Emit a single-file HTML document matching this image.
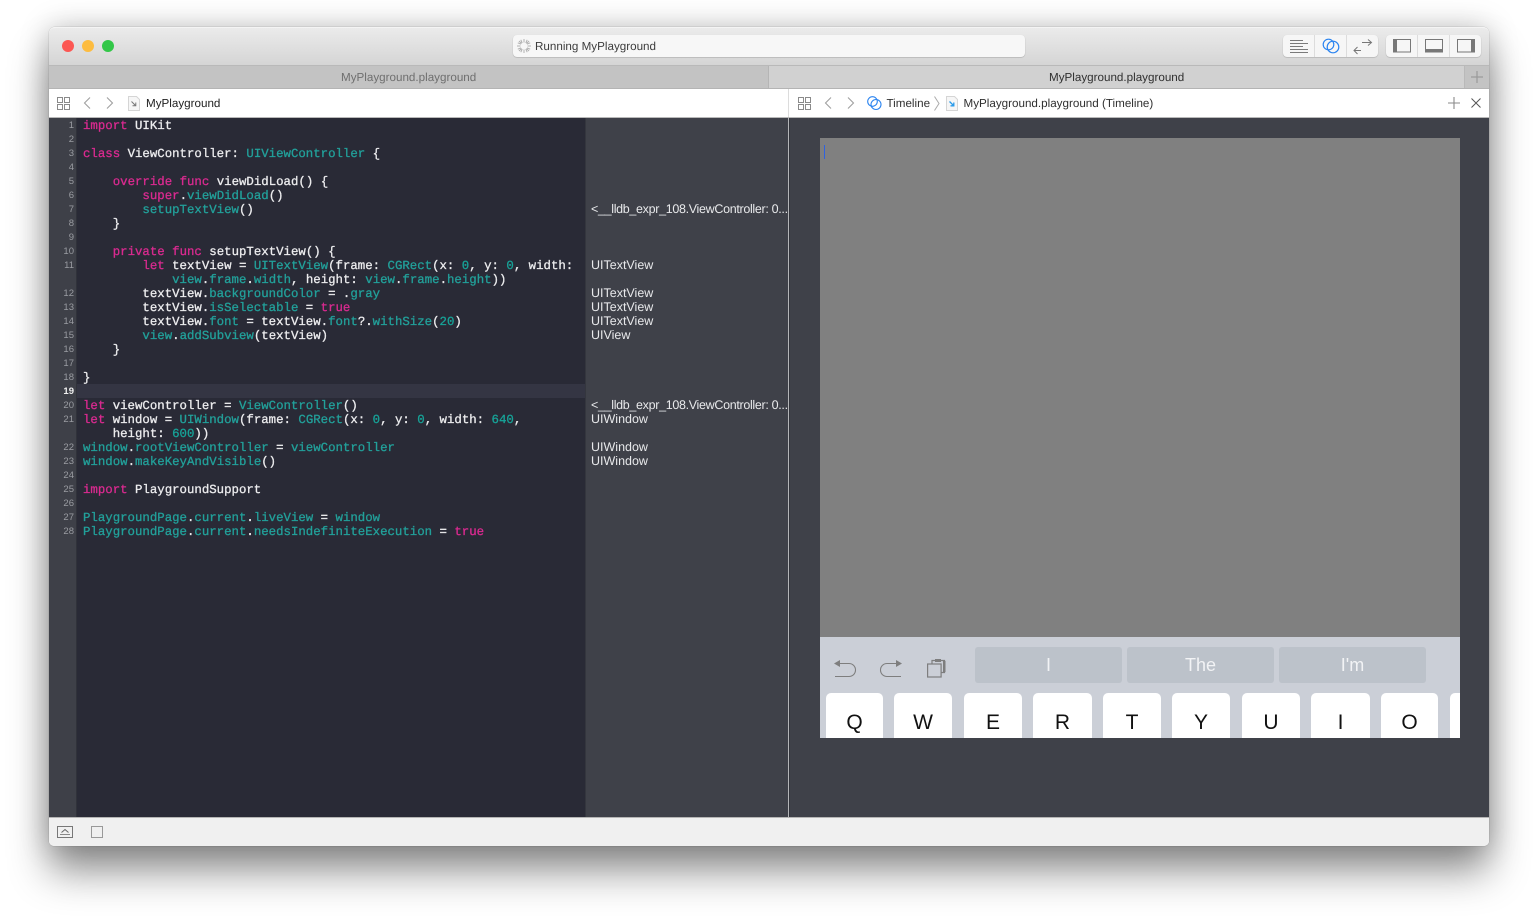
<!DOCTYPE html>
<html><head><meta charset="utf-8"><style>
html,body{margin:0;padding:0;background:#fff;width:1537px;height:920px;overflow:hidden}
*{box-sizing:border-box}
.a{position:absolute}
#win{position:absolute;left:49px;top:27px;width:1440px;height:819px;border-radius:6px 6px 5px 5px;box-shadow:0 0 0 .5px rgba(0,0,0,.12),0 26px 40px rgba(0,0,0,.42),0 0 30px rgba(0,0,0,.22)}
.s{font-family:"Liberation Sans",sans-serif;font-size:11.65px;line-height:14px;white-space:pre;position:absolute;text-rendering:geometricPrecision;margin-top:1px}
.c{font-family:"Liberation Mono",monospace;font-size:12.38px;line-height:14px;white-space:pre;position:absolute;left:83px;color:#ececee;text-rendering:geometricPrecision;-webkit-text-stroke:.3px;margin-top:1px}
.k{color:#da2a90}.t{color:#22a09a}.n{color:#17a398}
.g{font-family:"Liberation Sans",sans-serif;font-size:9.5px;line-height:14px;position:absolute;left:49px;width:25px;text-align:right;color:#9a9ca2;margin-top:1px}
.r{font-family:"Liberation Sans",sans-serif;font-size:12.5px;line-height:14px;position:absolute;left:591px;color:#e8e9eb;white-space:pre;text-rendering:geometricPrecision}
.l{letter-spacing:-.32px}
.key{position:absolute;top:693px;height:45px;background:#fff;border-radius:5px 5px 0 0;font-family:"Liberation Sans",sans-serif;font-size:21px;text-align:center;line-height:59px;color:#111;overflow:hidden}
.sug{position:absolute;top:647px;height:36px;width:147px;background:#bcc2ca;border-radius:3px;color:#f2f3f5;font-family:"Liberation Sans",sans-serif;font-size:18px;text-align:center;line-height:36px}
svg{position:absolute;overflow:visible}
</style></head><body>
<div id="win"></div>

<!-- title bar -->
<div class="a" style="left:49px;top:27px;width:1440px;height:38px;background:linear-gradient(#ebebeb,#d5d5d5);border-radius:6px 6px 0 0;border-top:1px solid #f4f4f4"></div>
<div class="a" style="left:62px;top:40px;width:12px;height:12px;border-radius:50%;background:#fc5753"></div>
<div class="a" style="left:82px;top:40px;width:12px;height:12px;border-radius:50%;background:#fdbc40"></div>
<div class="a" style="left:102px;top:40px;width:12px;height:12px;border-radius:50%;background:#33c748"></div>

<div class="a" style="left:513px;top:35px;width:512px;height:22px;background:#f7f7f7;border-radius:4px;box-shadow:0 .5px 1px rgba(0,0,0,.25)"></div>
<svg style="left:517px;top:39px" width="14" height="14" stroke="#b0b0b0" stroke-width="1" fill="none"><path d="M7 0v3.500M7 10.500V14M0 7h3.500M10.500 7H14M2 2l2.500 2.500M9.500 9.500L12 12M12 2L9.500 4.500M4.500 9.500L2 12M3.800 .8l1.400 3.200M8.800 10l1.400 3.200M.8 10.200L4 8.800M10 5.200l3.200-1.400M10.200 .8L8.800 4M5.200 10l-1.400 3.200M.8 3.800L4 5.200M10 8.800l3.200 1.400"/></svg>
<div class="s" style="left:535px;top:39px;color:#3d3d3d">Running MyPlayground</div>

<div class="a" style="left:1283px;top:35px;width:95px;height:22px;background:#f6f6f6;border-radius:4px;box-shadow:0 .5px 1px rgba(0,0,0,.25)"></div>
<div class="a" style="left:1386px;top:35px;width:95px;height:22px;background:#f6f6f6;border-radius:4px;box-shadow:0 .5px 1px rgba(0,0,0,.25)"></div>
<div class="a" style="left:1314px;top:35px;width:1px;height:22px;background:#dcdcdc"></div>
<div class="a" style="left:1346px;top:35px;width:1px;height:22px;background:#dcdcdc"></div>
<div class="a" style="left:1417px;top:35px;width:1px;height:22px;background:#dcdcdc"></div>
<div class="a" style="left:1449px;top:35px;width:1px;height:22px;background:#dcdcdc"></div>
<svg style="left:1290px;top:40px" width="18" height="13" stroke="#7a7a7a" stroke-width="1" fill="none"><path d="M0 .5h13M0 3.500h18M0 6.500h13M0 9.500h18M0 12.500h18"/></svg>
<svg style="left:1322px;top:38px" width="18" height="16" stroke="#2b84f0" stroke-width="1.200" fill="none"><circle cx="6.500" cy="6.500" r="5.300"/><circle cx="11" cy="9" r="5.800"/></svg>
<svg style="left:1353px;top:39px" width="20" height="15" stroke="#777" stroke-width="1" fill="none"><path d="M1 11.500h7M4.500 8l-3.500 3.500 3.500 3.500M9 3.500h9M15 .5l3.500 3-3.500 3"/></svg>
<svg style="left:1393px;top:39px" width="18" height="14" fill="none"><rect x=".5" y=".5" width="17" height="12.500" stroke="#777"/><rect x="1" y="1" width="3" height="12" fill="#777"/></svg>
<svg style="left:1425px;top:39px" width="18" height="14" fill="none"><rect x=".5" y=".5" width="17" height="12.500" stroke="#777"/><rect x="1" y="10" width="16" height="3" fill="#777"/></svg>
<svg style="left:1457px;top:39px" width="18" height="14" fill="none"><rect x=".5" y=".5" width="17" height="12.500" stroke="#777"/><rect x="14" y="1" width="3" height="12" fill="#777"/></svg>

<!-- tabs -->
<div class="a" style="left:49px;top:65px;width:1440px;height:24px;background:#c3c3c3;border-top:1px solid #b9b9b9;border-bottom:1px solid #b4b4b4"></div>
<div class="a" style="left:768px;top:66px;width:697px;height:22px;background:#d1d1d1;border-left:1px solid #b5b5b5;border-right:1px solid #b9b9b9"></div>
<div class="s" style="left:341px;top:70px;color:#6f6f6f">MyPlayground.playground</div>
<div class="s" style="left:1049px;top:70px;color:#303030">MyPlayground.playground</div>
<svg style="left:1471px;top:71px" width="12" height="12" stroke="#9a9a9a" stroke-width="1.200"><path d="M6 0v12M0 6h12"/></svg>

<!-- nav bars -->
<div class="a" style="left:49px;top:89px;width:1440px;height:29px;background:#fff;border-bottom:1px solid #b9b9b9"></div>
<div class="a" style="left:788px;top:89px;width:1px;height:28px;background:#dcdcdc"></div>
<svg style="left:57px;top:97px" width="13" height="13" stroke="#8a8a8a" stroke-width="1" fill="none"><path d="M.5.500h5v5h-5zM7.500.500h5v5h-5zM.5 7.500h5v5h-5zM7.500 7.500h5v5h-5z"/></svg>
<svg style="left:83px;top:97px" width="8" height="12" stroke="#a0a0a0" stroke-width="1.100" fill="none"><path d="M7 .5L1.500 6 7 11.500"/></svg>
<svg style="left:106px;top:97px" width="8" height="12" stroke="#a0a0a0" stroke-width="1.100" fill="none"><path d="M1 .5L6.500 6 1 11.500"/></svg>
<svg style="left:128px;top:96px" width="12" height="15" fill="none"><path d="M.5.500h8l3 3v11H.5z" fill="#f6f6f6" stroke="#d5d5d5"/><path d="M3.500 5.500l4 4M7.800 6.500v3.300H4.500" stroke="#777"/></svg>
<div class="s" style="left:146px;top:96px;color:#1f1f1f">MyPlayground</div>

<svg style="left:798px;top:97px" width="13" height="13" stroke="#8a8a8a" stroke-width="1" fill="none"><path d="M.5.500h5v5h-5zM7.500.500h5v5h-5zM.5 7.500h5v5h-5zM7.500 7.500h5v5h-5z"/></svg>
<svg style="left:824px;top:97px" width="8" height="12" stroke="#a0a0a0" stroke-width="1.100" fill="none"><path d="M7 .5L1.500 6 7 11.500"/></svg>
<svg style="left:847px;top:97px" width="8" height="12" stroke="#a0a0a0" stroke-width="1.100" fill="none"><path d="M1 .5L6.500 6 1 11.500"/></svg>
<svg style="left:867px;top:96px" width="15" height="15" stroke="#2b84f0" stroke-width="1.100" fill="none"><circle cx="5.500" cy="5.500" r="4.800"/><circle cx="9" cy="8.500" r="5"/></svg>
<div class="s" style="left:886.500px;top:96px;color:#303030">Timeline</div>
<svg style="left:934px;top:96px" width="6" height="15" stroke="#aaa" stroke-width="1" fill="none"><path d="M.5.500L5 7.500.5 14.500"/></svg>
<svg style="left:946px;top:96px" width="12" height="15" fill="none"><path d="M.5.500h8l3 3v11H.5z" fill="#f6f6f6" stroke="#d5d5d5"/><path d="M3.500 5.500l4 4M7.800 6.500v3.300H4.500" stroke="#2b9bea" stroke-width="1.300"/></svg>
<div class="s" style="left:963.500px;top:96px;color:#303030">MyPlayground.playground (Timeline)</div>
<svg style="left:1448px;top:97px" width="12" height="12" stroke="#8a8a8a" stroke-width="1.100"><path d="M6 0v12M0 6h12"/></svg>
<svg style="left:1471px;top:98px" width="10" height="10" stroke="#555" stroke-width="1"><path d="M.5.500l9 9M9.500.500l-9 9"/></svg>

<!-- editor -->
<div class="a" style="left:49px;top:118px;width:28px;height:700px;background:#3e4048;border-right:1px solid #30323a"></div>
<div class="a" style="left:77px;top:118px;width:508px;height:700px;background:#292a36"></div>
<div class="a" style="left:77px;top:384px;width:508px;height:14px;background:#343543"></div>
<div class="a" style="left:585px;top:118px;width:204px;height:700px;background:#3f4149;border-left:1px solid #34363e"></div>
<div class="a" style="left:790px;top:118px;width:699px;height:700px;background:#3f4149"></div>
<div class="a" style="left:788px;top:118px;width:1px;height:700px;background:#b4b5b8"></div>
<div class="a" style="left:789px;top:118px;width:1px;height:700px;background:#33353c"></div>

<div class="g" style="top:118px">1</div><div class="g" style="top:132px">2</div><div class="g" style="top:146px">3</div><div class="g" style="top:160px">4</div><div class="g" style="top:174px">5</div><div class="g" style="top:188px">6</div><div class="g" style="top:202px">7</div><div class="g" style="top:216px">8</div><div class="g" style="top:230px">9</div><div class="g" style="top:244px">10</div><div class="g" style="top:258px">11</div><div class="g" style="top:286px">12</div><div class="g" style="top:300px">13</div><div class="g" style="top:314px">14</div><div class="g" style="top:328px">15</div><div class="g" style="top:342px">16</div><div class="g" style="top:356px">17</div><div class="g" style="top:370px">18</div><div class="g" style="top:384px;color:#f0f0f0;font-weight:bold">19</div><div class="g" style="top:398px">20</div><div class="g" style="top:412px">21</div><div class="g" style="top:440px">22</div><div class="g" style="top:454px">23</div><div class="g" style="top:468px">24</div><div class="g" style="top:482px">25</div><div class="g" style="top:496px">26</div><div class="g" style="top:510px">27</div><div class="g" style="top:524px">28</div>

<div class="c" style="top:118px"><span class="k">import</span> UIKit</div>
<div class="c" style="top:146px"><span class="k">class</span> ViewController: <span class="t">UIViewController</span> {</div>
<div class="c" style="top:174px">    <span class="k">override</span> <span class="k">func</span> viewDidLoad() {</div>
<div class="c" style="top:188px">        <span class="k">super</span>.<span class="t">viewDidLoad</span>()</div>
<div class="c" style="top:202px">        <span class="t">setupTextView</span>()</div>
<div class="c" style="top:216px">    }</div>
<div class="c" style="top:244px">    <span class="k">private</span> <span class="k">func</span> setupTextView() {</div>
<div class="c" style="top:258px">        <span class="k">let</span> textView = <span class="t">UITextView</span>(frame: <span class="t">CGRect</span>(x: <span class="n">0</span>, y: <span class="n">0</span>, width:</div>
<div class="c" style="top:272px">            <span class="t">view</span>.<span class="t">frame</span>.<span class="t">width</span>, height: <span class="t">view</span>.<span class="t">frame</span>.<span class="t">height</span>))</div>
<div class="c" style="top:286px">        textView.<span class="t">backgroundColor</span> = .<span class="t">gray</span></div>
<div class="c" style="top:300px">        textView.<span class="t">isSelectable</span> = <span class="k">true</span></div>
<div class="c" style="top:314px">        textView.<span class="t">font</span> = textView.<span class="t">font</span>?.<span class="t">withSize</span>(<span class="n">20</span>)</div>
<div class="c" style="top:328px">        <span class="t">view</span>.<span class="t">addSubview</span>(textView)</div>
<div class="c" style="top:342px">    }</div>
<div class="c" style="top:370px">}</div>
<div class="c" style="top:398px"><span class="k">let</span> viewController = <span class="t">ViewController</span>()</div>
<div class="c" style="top:412px"><span class="k">let</span> window = <span class="t">UIWindow</span>(frame: <span class="t">CGRect</span>(x: <span class="n">0</span>, y: <span class="n">0</span>, width: <span class="n">640</span>,</div>
<div class="c" style="top:426px">    height: <span class="n">600</span>))</div>
<div class="c" style="top:440px"><span class="t">window</span>.<span class="t">rootViewController</span> = <span class="t">viewController</span></div>
<div class="c" style="top:454px"><span class="t">window</span>.<span class="t">makeKeyAndVisible</span>()</div>
<div class="c" style="top:482px"><span class="k">import</span> PlaygroundSupport</div>
<div class="c" style="top:510px"><span class="t">PlaygroundPage</span>.<span class="t">current</span>.<span class="t">liveView</span> = <span class="t">window</span></div>
<div class="c" style="top:524px"><span class="t">PlaygroundPage</span>.<span class="t">current</span>.<span class="t">needsIndefiniteExecution</span> = <span class="k">true</span></div>

<div class="r l" style="top:202px">&lt;__lldb_expr_108.ViewController: 0...</div>
<div class="r" style="top:258px">UITextView</div>
<div class="r" style="top:286px">UITextView</div>
<div class="r" style="top:300px">UITextView</div>
<div class="r" style="top:314px">UITextView</div>
<div class="r" style="top:328px">UIView</div>
<div class="r l" style="top:398px">&lt;__lldb_expr_108.ViewController: 0...</div>
<div class="r" style="top:412px">UIWindow</div>
<div class="r" style="top:440px">UIWindow</div>
<div class="r" style="top:454px">UIWindow</div>

<!-- live view -->
<div class="a" style="left:820px;top:138px;width:640px;height:499px;background:#808080"></div>
<div class="a" style="left:824px;top:145px;width:1px;height:14px;background:#2f62e0"></div>
<div class="a" style="left:820px;top:637px;width:640px;height:101px;background:#cbcfd7;overflow:hidden"></div>
<svg style="left:834px;top:658px" width="22" height="20" stroke="#7e7e7e" stroke-width="1.100" fill="none"><path d="M2 5.500h13a5.500 5.500 0 0 1 0 13H1"/><path d="M0 5.500L6 2v7z" fill="#7e7e7e" stroke="none"/></svg>
<svg style="left:880px;top:658px" width="22" height="20" stroke="#7e7e7e" stroke-width="1.100" fill="none"><path d="M20 5.500H7a5.500 5.500 0 0 0 0 13h14"/><path d="M22 5.500L16 2v7z" fill="#7e7e7e" stroke="none"/></svg>
<svg style="left:927px;top:658px" width="20" height="20" stroke="#7e7e7e" stroke-width="1.200" fill="none"><rect x=".6" y="6" width="13.500" height="13"/><path d="M5 5.500V2.500h12.500v12h-3"/><rect x="8" y="1" width="6" height="3" fill="#7e7e7e" stroke="none"/><rect x="16" y="3" width="2.500" height="11" fill="#7e7e7e" stroke="none"/></svg>
<div class="sug" style="left:975px">I</div>
<div class="sug" style="left:1127px">The</div>
<div class="sug" style="left:1279px">I'm</div>
<div class="key" style="left:826px;width:57px">Q</div>
<div class="key" style="left:894px;width:58px">W</div>
<div class="key" style="left:964px;width:58px">E</div>
<div class="key" style="left:1033px;width:59px">R</div>
<div class="key" style="left:1103px;width:58px">T</div>
<div class="key" style="left:1172px;width:58px">Y</div>
<div class="key" style="left:1242px;width:58px">U</div>
<div class="key" style="left:1311px;width:59px">I</div>
<div class="key" style="left:1381px;width:57px">O</div>
<div class="key" style="left:1450px;width:10px;border-radius:5px 0 0 0"></div>

<!-- bottom bar -->
<div class="a" style="left:49px;top:817px;width:1440px;height:29px;background:#f0f0f0;border-top:1px solid #b5b5b5;border-radius:0 0 5px 5px"></div>
<svg style="left:57px;top:826px" width="16" height="12" fill="none"><rect x=".5" y=".5" width="15" height="11" stroke="#777"/><path d="M4.500 6.500L8 3.500l3.500 3" stroke="#666"/><path d="M3 8.500h10" stroke="#888"/></svg>
<svg style="left:91px;top:826px" width="12" height="12" fill="none"><rect x=".5" y=".5" width="11" height="11" stroke="#999"/></svg>
</body></html>
